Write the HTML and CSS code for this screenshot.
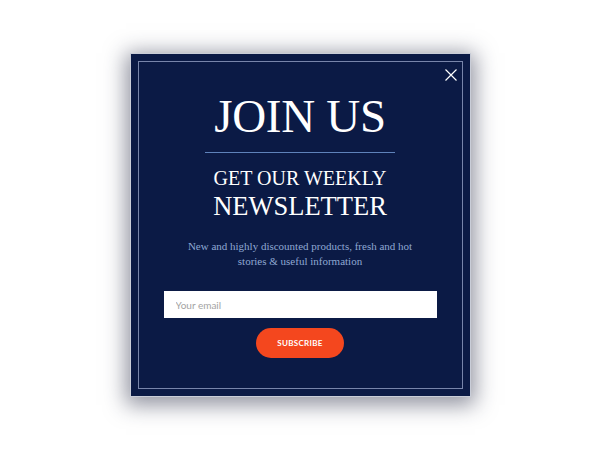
FILE: index.html
```html
<!DOCTYPE html>
<html lang="en">
<head>
<meta charset="utf-8">
<title>Join us</title>
<link rel="stylesheet" href="styles.css">
</head>
<body>
<div class="overlay">
  <div class="modal">
    <button class="close" aria-label="Close">
      <svg width="12" height="12" viewBox="0 0 12 12"><path d="M0.5 0.5 L11.5 11.5 M11.5 0.5 L0.5 11.5" stroke="#ffffff" stroke-width="1.2" fill="none"/></svg>
    </button>
    <div class="frame">
      <h1 class="title">JOIN US</h1>
      <div class="rule"></div>
      <div class="sub">GET OUR WEEKLY</div>
      <div class="sub-big">NEWSLETTER</div>
      <p class="desc">New and highly discounted products, fresh and hot<br>stories &amp; useful information</p>
      <input class="email" type="text" placeholder="Your email">
      <button class="subscribe">SUBSCRIBE</button>
    </div>
  </div>
</div>
</body>
</html>
```
FILE: styles.css
```css
html, body {
  margin: 0;
  padding: 0;
  background: #ffffff;
}
.overlay {
  width: 600px;
  height: 450px;
  display: flex;
  align-items: center;
  justify-content: center;
}
.modal {
  position: relative;
  width: 341px;
  height: 344px;
  box-sizing: border-box;
  background: #0b1a45;
  border: 1px solid #c9cdd8;
  padding: 7px;
  box-shadow: 0 4px 20px 4px rgba(35, 40, 65, 0.5);
}
.frame {
  height: 100%;
  box-sizing: border-box;
  border: 1px solid #7885aa;
  display: flex;
  flex-direction: column;
  align-items: center;
  font-family: "Liberation Serif", "Times New Roman", serif;
  color: #ffffff;
}
.close {
  position: absolute;
  top: 14px;
  right: 12px;
  width: 14px;
  height: 14px;
  padding: 0;
  border: 0;
  background: transparent;
  display: flex;
  align-items: center;
  justify-content: center;
}
.title {
  margin: 31px 0 0;
  font-weight: normal;
  font-size: 47px;
  line-height: 47px;
  letter-spacing: -0.3px;
}
.rule {
  margin-top: 12px;
  width: 190px;
  height: 1px;
  background: #5f82ba;
}
.sub {
  margin-top: 15px;
  font-size: 20px;
  line-height: 20px;
}
.sub-big {
  margin-top: 5px;
  font-size: 26.5px;
  line-height: 27px;
}
.desc {
  margin: 19px 0 0;
  font-size: 11px;
  line-height: 15px;
  color: #8fa8d3;
  text-align: center;
}
.email {
  margin-top: 22px;
  width: 273px;
  height: 27px;
  box-sizing: border-box;
  border: 0;
  padding: 0 12px;
  background: #ffffff;
  font-family: Lato, "Liberation Sans", sans-serif;
  font-size: 10px;
  color: #333;
  outline: none;
}
.email::placeholder {
  color: #a3a3a3;
}
.subscribe {
  margin-top: 10px;
  width: 88px;
  height: 30px;
  border: 0;
  border-radius: 15px;
  background: #f4471e;
  color: #ffffff;
  font-family: Lato, "Liberation Sans", sans-serif;
  font-weight: bold;
  font-size: 8px;
  letter-spacing: 0.3px;
  padding: 0;
}
```
